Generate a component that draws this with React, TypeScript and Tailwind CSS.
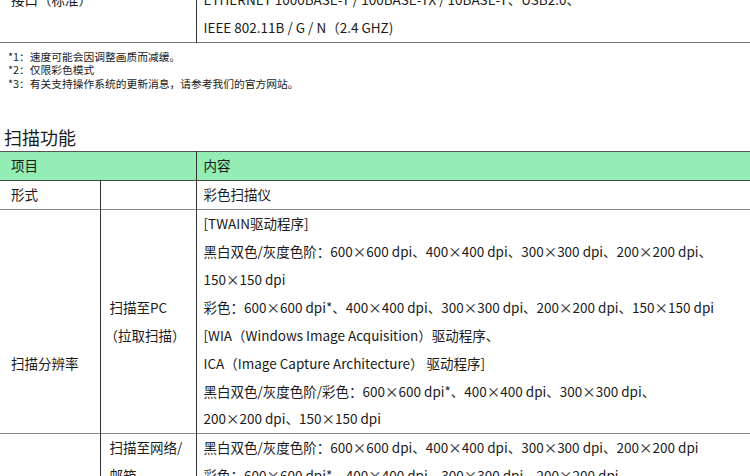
import React from "react";

const font = { fontFamily: '"Noto Sans CJK SC", "Noto Sans", sans-serif' };

export default function App() {
  return (
    <div
      className="w-[750px] h-[476px] overflow-hidden bg-white text-[#1a1a1a] text-[13.5px]"
      style={font}
    >
      <div className="-mt-[14px]">
        <table className="w-full border-collapse leading-[27.9px]">
          <tbody>
            <tr className="border-b border-[#777]">
              <td className="w-[196px] align-top pl-[11px] border-r border-[#333]">
                接口（标准）
              </td>
              <td className="align-top pl-[7px]">
                <div>ETHERNET 1000BASE-T / 100BASE-TX / 10BASE-T、USB2.0、</div>
                <div>IEEE 802.11B / G / N（2.4 GHZ)</div>
              </td>
            </tr>
          </tbody>
        </table>
      </div>

      <div className="pt-[7px] pl-[8px] text-[10.75px] leading-[13.5px]">
        <div>*1：速度可能会因调整画质而减缓。</div>
        <div>*2：仅限彩色模式</div>
        <div>*3：有关支持操作系统的更新消息，请参考我们的官方网站。</div>
      </div>

      <h2 className="mt-[35px] mb-[2px] pl-[4px] text-[18px] leading-[24px] font-normal">
        扫描功能
      </h2>

      <table className="w-full border-collapse leading-[27.9px] border-t border-[#555]">
        <tbody>
          <tr className="bg-[#93edb4] border-b border-[#444]">
            <td colSpan={2} className="pl-[11px] align-middle border-r border-[#333]">
              项目
            </td>
            <td className="pl-[7px] align-middle">内容</td>
          </tr>
          <tr className="border-b border-[#888]">
            <td className="w-[100px] pl-[11px] align-middle border-r border-[#333]">形式</td>
            <td className="w-[96px] border-r border-[#333]"></td>
            <td className="pl-[7px] align-middle">彩色扫描仪</td>
          </tr>
          <tr className="border-b border-[#888]">
            <td className="pl-[11px] align-top pt-[140px] border-r border-[#333]">扫描分辨率</td>
            <td className="pl-[9px] align-middle border-r border-[#333]">
              <div>扫描至PC</div>
              <div className="-ml-[5px]">（拉取扫描）</div>
            </td>
            <td className="pl-[7px] align-middle">
              <div>[TWAIN驱动程序]</div>
              <div>黑白双色/灰度色阶：600×600 dpi、400×400 dpi、300×300 dpi、200×200 dpi、</div>
              <div>150×150 dpi</div>
              <div>彩色：600×600 dpi*、400×400 dpi、300×300 dpi、200×200 dpi、150×150 dpi</div>
              <div>[WIA（Windows Image Acquisition）驱动程序、</div>
              <div>ICA（Image Capture Architecture） 驱动程序]</div>
              <div>黑白双色/灰度色阶/彩色：600×600 dpi*、400×400 dpi、300×300 dpi、</div>
              <div>200×200 dpi、150×150 dpi</div>
            </td>
          </tr>
          <tr className="border-b border-[#888]">
            <td className="border-r border-[#333]"></td>
            <td className="pl-[9px] align-top border-r border-[#333]">
              <div>扫描至网络/</div>
              <div>邮箱</div>
            </td>
            <td className="pl-[7px] align-top">
              <div>黑白双色/灰度色阶：600×600 dpi、400×400 dpi、300×300 dpi、200×200 dpi</div>
              <div>彩色：600×600 dpi*、400×400 dpi、300×300 dpi、200×200 dpi</div>
            </td>
          </tr>
        </tbody>
      </table>
    </div>
  );
}
